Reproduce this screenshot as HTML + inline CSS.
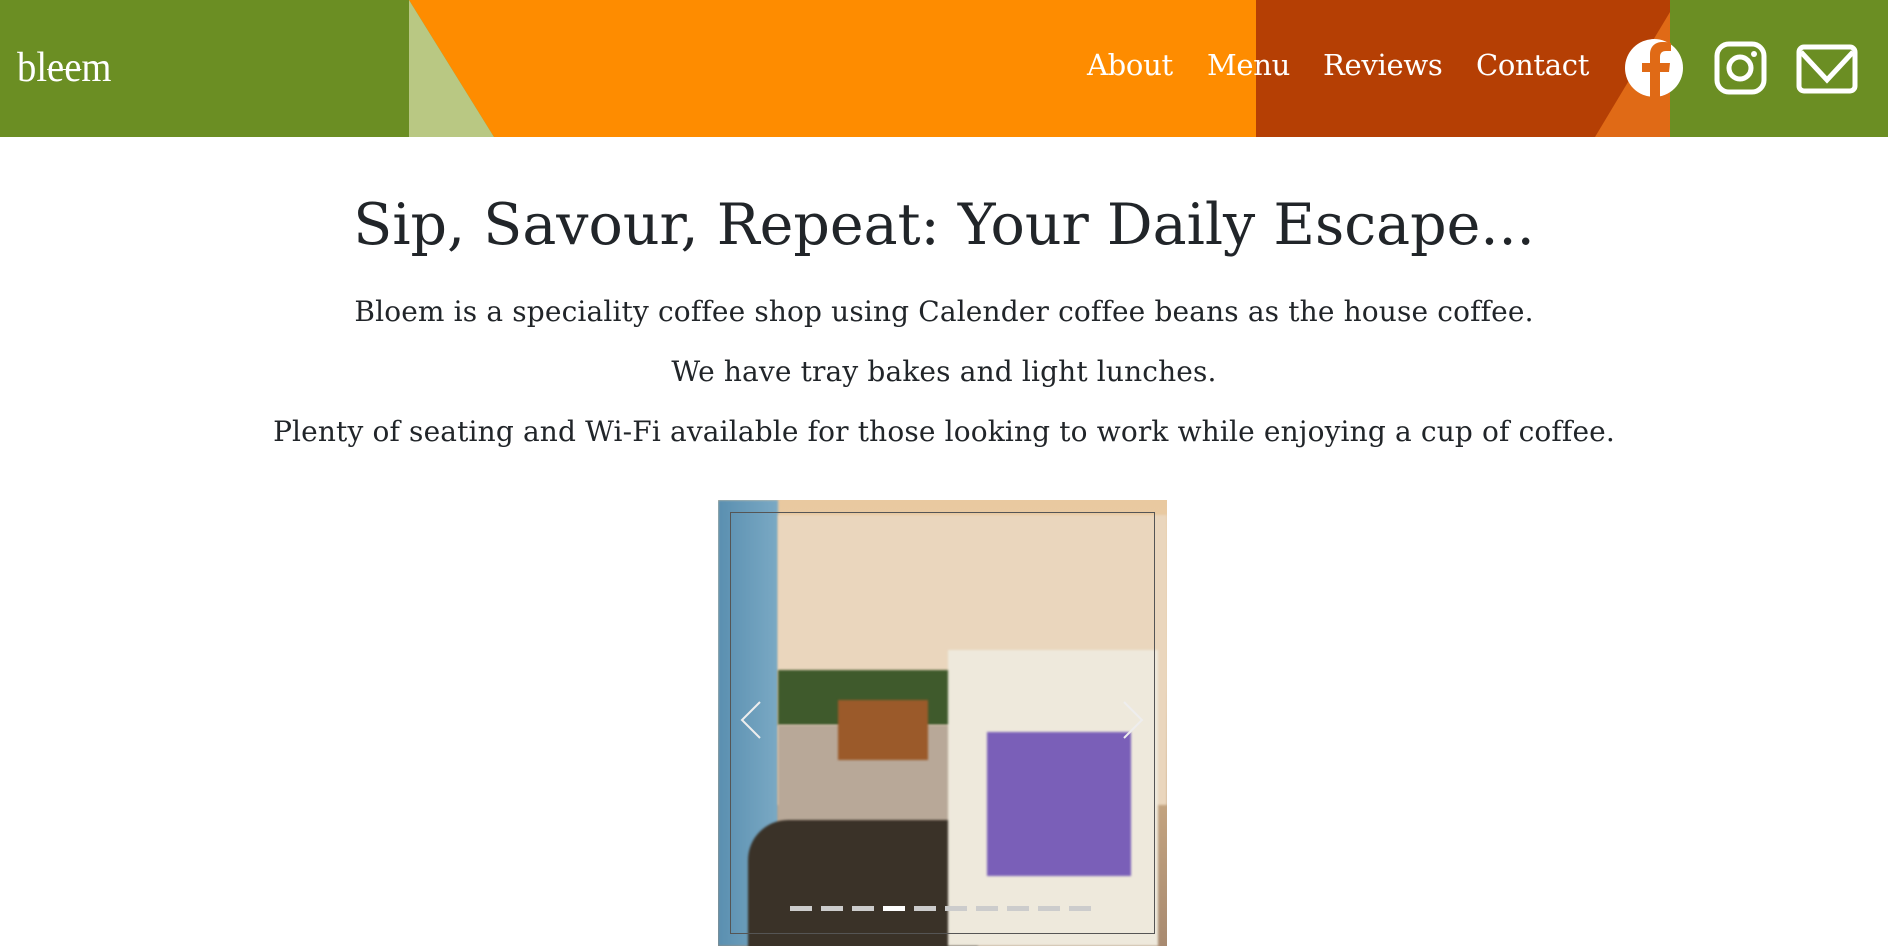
<!DOCTYPE html>
<html><head><meta charset="utf-8"><style>
*{margin:0;padding:0;box-sizing:border-box}
body{width:1888px;height:946px;overflow:hidden;background:#fff;font-family:"DejaVu Serif","Liberation Serif",serif;color:#212529}
.hdr{position:absolute;left:0;top:0;width:1888px;height:137px}
.logo{position:absolute;left:17px;top:44px;font-family:"Liberation Serif",serif;font-size:42px;color:#fff;transform:scaleX(0.92);transform-origin:left;letter-spacing:0px}
.nav{position:absolute;top:48px;font-size:29px;color:#fff;font-family:"DejaVu Serif",serif;letter-spacing:-0.3px}
h1{position:absolute;left:0;width:1888px;top:192px;text-align:center;font-weight:400;font-size:57px;letter-spacing:0px}
p{position:absolute;left:0;width:1888px;text-align:center;font-size:28px;letter-spacing:0.15px}
.img{position:absolute;left:718px;top:500px;width:449px;height:446px;overflow:hidden;
background:linear-gradient(180deg,#e9c9a0 0%,#e8cfad 40%,#c8a882 62%,#a88a70 100%)}
.img>div{filter:blur(1px)}
</style></head><body>
<svg class="hdr" width="1888" height="137" viewBox="0 0 1888 137">
<rect width="1888" height="137" fill="#6b8e23"/>
<polygon points="409,0 1256,0 1256,137 494,137" fill="#fe8c00"/>
<polygon points="409,0 494,137 409,137" fill="#b9c883"/>
<rect x="1256" y="0" width="414" height="137" fill="#b53f04"/>
<polygon points="1670,12 1670,137 1595,137" fill="#e06a16"/>
<rect x="1670" y="0" width="218" height="137" fill="#6b8e23"/>
<circle cx="1654" cy="68" r="29" fill="#fff"/>
<path d="M1660 98 V72 H1669 L1670 63 H1660 V57 C1660 53 1662 51 1666 51 H1671 V43 C1668 42 1665 42 1662 42 C1655 42 1650 47 1650 54 V63 H1642 V72 H1650 V98 Z" fill="#e06a16"/>
<rect x="1717" y="44" width="47" height="48" rx="12" fill="none" stroke="#fff" stroke-width="5"/>
<circle cx="1740" cy="68" r="11" fill="none" stroke="#fff" stroke-width="5"/>
<circle cx="1754" cy="54" r="3" fill="#fff"/>
<rect x="1799" y="47" width="56" height="44" rx="5" fill="none" stroke="#fff" stroke-width="5"/>
<path d="M1801 52 L1827 80 L1853 52" fill="none" stroke="#fff" stroke-width="5"/>
</svg>
<div class="logo">bl<span style="text-decoration:line-through;text-decoration-thickness:1px">ee</span>m</div>
<div class="nav" style="left:1087px">About</div>
<div class="nav" style="left:1207px">Menu</div>
<div class="nav" style="left:1323px">Reviews</div>
<div class="nav" style="left:1476px">Contact</div>
<h1>Sip, Savour, Repeat: Your Daily Escape...</h1>
<p style="top:295px">Bloem is a speciality coffee shop using Calender coffee beans as the house coffee.</p>
<p style="top:355px">We have tray bakes and light lunches.</p>
<p style="top:415px">Plenty of seating and Wi-Fi available for those looking to work while enjoying a cup of coffee.</p>
<div class="img">
<div style="position:absolute;left:0;top:0;width:60px;height:446px;background:linear-gradient(90deg,#5a8fb0,#7aa9c4)"></div>
<div style="position:absolute;left:60px;top:15px;width:389px;height:290px;background:#ead6bd"></div>
<div style="position:absolute;left:60px;top:170px;width:250px;height:55px;background:#3f5a2c"></div>
<div style="position:absolute;left:60px;top:225px;width:250px;height:120px;background:#b8a898"></div>
<div style="position:absolute;left:120px;top:200px;width:90px;height:60px;background:#9b5a2a"></div>
<div style="position:absolute;left:30px;top:320px;width:230px;height:130px;background:#3a3228;border-radius:40px 20px 0 0"></div>
<div style="position:absolute;left:230px;top:150px;width:210px;height:296px;background:#eee9dc"></div>
<div style="position:absolute;left:269px;top:232px;width:144px;height:144px;background:#7a5fb8"></div>
<div style="position:absolute;left:12px;top:12px;width:425px;height:422px;border:1px solid #555;filter:none"></div>
<div style="position:absolute;left:72px;top:406px;display:flex;gap:9px;filter:none">
<i style="width:22px;height:5px;background:#ccc"></i><i style="width:22px;height:5px;background:#ccc"></i><i style="width:22px;height:5px;background:#ccc"></i><i style="width:22px;height:5px;background:#fff"></i><i style="width:22px;height:5px;background:#ccc"></i><i style="width:22px;height:5px;background:#ccc"></i><i style="width:22px;height:5px;background:#ccc"></i><i style="width:22px;height:5px;background:#ccc"></i><i style="width:22px;height:5px;background:#ccc"></i><i style="width:22px;height:5px;background:#ccc"></i>
</div>
<svg style="position:absolute;left:20px;top:200px" width="30" height="40"><path d="M22 2 L4 20 L22 38" fill="none" stroke="#eee" stroke-width="2"/></svg>
<svg style="position:absolute;left:400px;top:200px" width="30" height="40"><path d="M6 2 L24 20 L6 38" fill="none" stroke="#eee" stroke-width="2"/></svg>
</div>
</body></html>
